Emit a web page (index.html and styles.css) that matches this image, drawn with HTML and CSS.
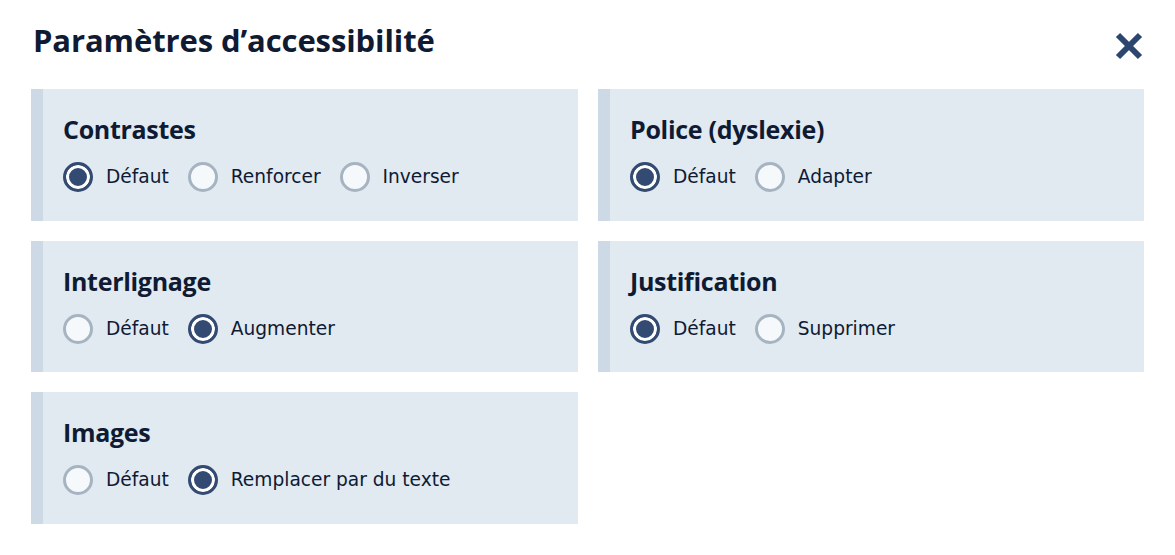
FILE: index.html
```html
<!DOCTYPE html>
<html lang="fr">
<head>
<meta charset="utf-8">
<title>Paramètres d'accessibilité</title>
<link rel="stylesheet" href="styles.css">
</head>
<body>
<div class="dialog">
  <header class="head">
    <h1 class="title">Paramètres d’accessibilité</h1>
    <button class="close" aria-label="Fermer">
      <svg width="30" height="30" viewBox="0 0 30 30"><path d="M4 4 L26 26 M26 4 L4 26" stroke="#2c4670" stroke-width="6" stroke-linecap="butt" fill="none"/></svg>
    </button>
  </header>
  <div class="grid">
    <section class="panel">
      <h2 class="ptitle">Contrastes</h2>
      <div class="opts">
        <label class="opt"><span class="radio on"></span>Défaut</label>
        <label class="opt"><span class="radio"></span>Renforcer</label>
        <label class="opt"><span class="radio"></span>Inverser</label>
      </div>
    </section>
    <section class="panel">
      <h2 class="ptitle">Police (dyslexie)</h2>
      <div class="opts">
        <label class="opt"><span class="radio on"></span>Défaut</label>
        <label class="opt"><span class="radio"></span>Adapter</label>
      </div>
    </section>
    <section class="panel">
      <h2 class="ptitle">Interlignage</h2>
      <div class="opts">
        <label class="opt"><span class="radio"></span>Défaut</label>
        <label class="opt"><span class="radio on"></span>Augmenter</label>
      </div>
    </section>
    <section class="panel">
      <h2 class="ptitle">Justification</h2>
      <div class="opts">
        <label class="opt"><span class="radio on"></span>Défaut</label>
        <label class="opt"><span class="radio"></span>Supprimer</label>
      </div>
    </section>
    <section class="panel">
      <h2 class="ptitle">Images</h2>
      <div class="opts">
        <label class="opt"><span class="radio"></span>Défaut</label>
        <label class="opt"><span class="radio on"></span>Remplacer par du texte</label>
      </div>
    </section>
  </div>
</div>
</body>
</html>
```

FILE: styles.css
```css
* { box-sizing: border-box; }
html, body { margin: 0; padding: 0; background: #ffffff; }
body { font-family: "DejaVu Sans", Verdana, sans-serif; color: #0f1a33; }

.dialog { padding: 21px 31px 0 31px; }

.head {
  display: flex;
  justify-content: space-between;
  align-items: flex-start;
  margin-bottom: 28px;
}
.title {
  margin: 0 0 0 2px;
  font-family: "Open Sans", Lato, sans-serif;
  font-weight: 700;
  font-size: 31px;
  line-height: 38px;
  letter-spacing: -0.1px;
  color: #0f1a33;
}
.close {
  margin: 10px 0 0 0;
  padding: 0;
  border: 0;
  background: none;
  width: 30px;
  height: 30px;
  cursor: pointer;
}
.close svg { display: block; }

.grid {
  display: grid;
  grid-template-columns: 547px 546px;
  gap: 20px;
}
.panel {
  background: #e1e9f1;
  border-left: 12px solid #cddae6;
  padding: 24px 20px 28px 20px;
  height: 131.5px;
}
.ptitle {
  margin: 0 0 17px 0;
  font-family: "Open Sans", Lato, sans-serif;
  font-weight: 700;
  font-size: 25px;
  line-height: 32px;
  letter-spacing: -0.3px;
  color: #0f1a33;
}
.opts {
  display: flex;
  align-items: center;
  gap: 19px;
  height: 30px;
}
.opt {
  display: flex;
  align-items: center;
  gap: 13px;
  font-size: 18.6px;
  line-height: 30px;
  color: #0f1a33;
}
.radio {
  width: 30px;
  height: 30px;
  border-radius: 50%;
  border: 3px solid #a6b4c2;
  background: #f6f9fc;
  flex: none;
}
.radio.on {
  border-color: #334a72;
  background: #334a72;
  box-shadow: inset 0 0 0 3px #ffffff;
}
```
